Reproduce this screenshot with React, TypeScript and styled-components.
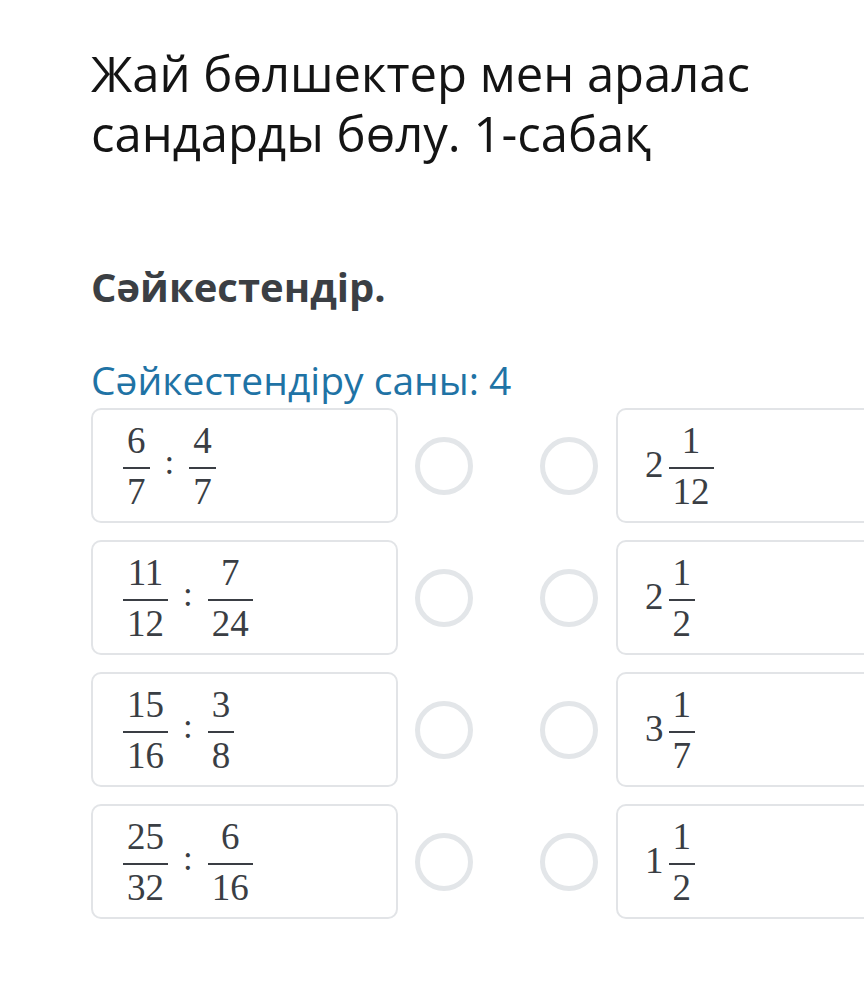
import React, { ReactElement } from 'react';
import styled, { createGlobalStyle } from 'styled-components';

interface FractionValue {
  num: string;
  den: string;
}

interface MatchRow {
  left: [FractionValue, FractionValue];
  whole: string;
  right: FractionValue;
}

const ROWS: MatchRow[] = [
  { left: [{ num: '6', den: '7' }, { num: '4', den: '7' }], whole: '2', right: { num: '1', den: '12' } },
  { left: [{ num: '11', den: '12' }, { num: '7', den: '24' }], whole: '2', right: { num: '1', den: '2' } },
  { left: [{ num: '15', den: '16' }, { num: '3', den: '8' }], whole: '3', right: { num: '1', den: '7' } },
  { left: [{ num: '25', den: '32' }, { num: '6', den: '16' }], whole: '1', right: { num: '1', den: '2' } },
];

const GlobalStyle = createGlobalStyle`
  html, body {
    margin: 0;
    padding: 0;
    background: #ffffff;
  }
  body {
    overflow-x: hidden;
    font-family: 'Open Sans', 'Noto Sans', sans-serif;
  }
`;

function Fraction({ num, den }: FractionValue): ReactElement {
  return (
    <FracBox>
      <Num>{num}</Num>
      <Bar />
      <Den>{den}</Den>
    </FracBox>
  );
}

function App(): ReactElement {
  return (
    <Page>
      <GlobalStyle />
      <Title>
        Жай бөлшектер мен аралас
        <br />
        сандарды бөлу. 1-сабақ
      </Title>
      <Instruction>Сәйкестендір.</Instruction>
      <MatchCount>Сәйкестендіру саны: 4</MatchCount>
      <Rows>
        {ROWS.map((row, index) => (
          <Row key={index}>
            <Card>
              <Fraction {...row.left[0]} />
              <Colon>:</Colon>
              <Fraction {...row.left[1]} />
            </Card>
            <Radio />
            <Radio wide />
            <Card side="right">
              <Whole>{row.whole}</Whole>
              <Fraction {...row.right} />
            </Card>
          </Row>
        ))}
      </Rows>
    </Page>
  );
}

const Page = styled.div`
  padding: 43px 0 60px 91px;
  overflow: hidden;
`;

const Title = styled.h1`
  margin: 0;
  font-size: 49px;
  line-height: 60px;
  font-weight: 400;
  color: #141414;
`;

const Instruction = styled.h2`
  margin: 100px 0 0;
  font-size: 40px;
  line-height: 48px;
  font-weight: 700;
  color: #3b3f44;
`;

const MatchCount = styled.div`
  margin-top: 46px;
  font-size: 39px;
  line-height: 46px;
  color: #1f73a5;
`;

const Rows = styled.div`
  margin-top: 5px;
  display: flex;
  flex-direction: column;
  gap: 17px;
`;

const Row = styled.div`
  display: flex;
  align-items: center;
`;

const Card = styled.div<{ side?: 'right' }>`
  box-sizing: border-box;
  flex-shrink: 0;
  width: 307px;
  height: 115px;
  border: 2px solid #e2e4e7;
  border-radius: 10px;
  display: flex;
  align-items: center;
  gap: ${({ side }) => (side === 'right' ? '5px' : '15px')};
  padding-left: ${({ side }) => (side === 'right' ? '27px' : '30px')};
  margin-left: ${({ side }) => (side === 'right' ? '18px' : '0')};
  font-family: 'Liberation Serif', 'DejaVu Serif', serif;
  color: #3a3e44;
`;

const Radio = styled.div<{ wide?: boolean }>`
  box-sizing: border-box;
  flex-shrink: 0;
  width: 58px;
  height: 58px;
  border: 5px solid #e3e6e9;
  border-radius: 50%;
  margin-left: ${({ wide }) => (wide ? '67px' : '17px')};
`;

const FracBox = styled.span`
  display: inline-flex;
  flex-direction: column;
  align-items: center;
  font-size: 37px;
  line-height: 35px;
`;

const Num = styled.span`
  padding: 0 4px 9px;
`;

const Bar = styled.span`
  align-self: stretch;
  height: 2px;
  background: #3a3e44;
`;

const Den = styled.span`
  padding: 5px 4px 0;
`;

const Colon = styled.span`
  font-size: 35px;
  line-height: 34px;
  padding-bottom: 6px;
`;

const Whole = styled.span`
  font-size: 37px;
  line-height: 35px;
  padding-bottom: 3px;
`;

export default App;
